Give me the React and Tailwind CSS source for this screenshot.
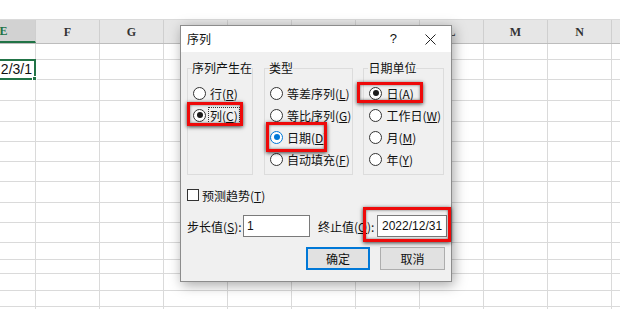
import React from "react";

const COLS = ["E", "F", "G", "H", "I", "J", "K", "L", "M", "N"];
const HIDDEN = ["H", "I", "J", "K"];
const ROW_H = [
    "h-[16px]", "h-[20px]", "h-[21px]", "h-[21px]", "h-[20px]", "h-[20px]", "h-[20px]",
    "h-[21px]", "h-[20px]", "h-[20px]", "h-[17px]", "h-[14px]", "h-[17px]", "h-[16px]", "h-[20px]",
];

function Radio({ label, accel, checked, blue, focus }) {
    return (
        <div className="flex items-center h-[22px] ml-[1px] gap-[3px]">
            <span
                className={`w-[13px] h-[13px] rounded-full border bg-white flex items-center justify-center shrink-0 ${
                    blue ? "border-[#0078d7]" : "border-[#333]"
                }`}
            >
                {checked && (
                    <span className={`w-[6px] h-[6px] rounded-full ${blue ? "bg-[#0078d7]" : "bg-[#1a1a1a]"}`} />
                )}
            </span>
            <span className={`whitespace-nowrap leading-[15px] px-[1px] ${focus ? "outline outline-1 outline-dotted outline-[#333]" : ""}`}>
                {label}(<span className="underline">{accel}</span>)
            </span>
        </div>
    );
}

function Group({ title, width, children }) {
    return (
        <fieldset className={`${width} h-[115px] border border-[#dcdcdc] pl-[4px] shrink-0`}>
            <legend className="leading-[16px] px-0">{title}</legend>
            <div className="mt-[6px] flex flex-col">{children}</div>
        </fieldset>
    );
}

function RedBox({ className }) {
    return (
        <div
            className={`absolute border-[3px] border-[#ee0a0a] shadow-[0_1px_4px_rgba(0,0,0,0.75),inset_0_0_3px_rgba(0,0,0,0.55)] ${className}`}
        />
    );
}

export default function App() {
    return (
        <div className="relative w-[620px] h-[309px] overflow-hidden bg-white font-['Liberation_Sans',sans-serif]">
            {/* sheet */}
            <div className="h-[20px] bg-white border-b border-[#dadada]" />
            <div className="flex -ml-[28px] h-[24px] bg-[#e6e6e6] border-b border-[#bdbdbd]">
                {COLS.map((c, i) => (
                    <div
                        key={c}
                        className={`w-[64px] shrink-0 border-r border-[#cfcfcf] flex items-center justify-center font-['Liberation_Serif',serif] font-bold text-[12px] ${
                            i === 0 ? "bg-[#d2d2d2] text-[#217346] border-b-2 border-b-[#217346]" : "text-[#333]"
                        }`}
                    >
                        {HIDDEN.includes(c) ? "" : c}
                    </div>
                ))}
                <div className="flex-1" />
            </div>
            {ROW_H.map((h, r) => (
                <div key={r} className={`flex -ml-[28px] ${h} border-b border-[#dadada]`}>
                    {COLS.map((c, i) => (
                        <div key={c} className="relative w-[64px] shrink-0 border-r border-[#dadada]">
                            {r === 1 && i === 0 && (
                                <div className="absolute -inset-y-[1px] -left-[1px] -right-[1px] border-2 border-[#217346] flex items-center justify-end pr-[2px] text-[14px] text-[#111]">
                                    2/3/1
                                    <span className="absolute -right-[3px] -bottom-[3px] w-[5px] h-[5px] bg-[#217346] border border-white" />
                                </div>
                            )}
                        </div>
                    ))}
                    <div className="flex-1" />
                </div>
            ))}

            {/* dialog window */}
            <div className="absolute left-[180px] top-[25px] w-[272px] h-[257px] border border-[#8c8c8c] bg-[#f0f0f0] shadow-[2px_3px_12px_rgba(0,0,0,0.35)] flex flex-col text-[12px] text-[#111] font-['Noto_Sans_CJK_SC',sans-serif]">
                <div className="h-[26px] bg-white flex items-center pl-[6px] shrink-0">
                    <span className="leading-[16px]">序列</span>
                    <span className="ml-auto mr-[28px] font-['Liberation_Sans',sans-serif] text-[13px]">?</span>
                    <svg width="11" height="11" viewBox="0 0 11 11" className="mr-[15px]">
                        <path d="M0.5 0.5L10.5 10.5M10.5 0.5L0.5 10.5" stroke="#222" strokeWidth="1" />
                    </svg>
                </div>

                <div className="flex pl-[6px] mt-[8px]">
                    <Group title="序列产生在" width="w-[66px]">
                        <Radio label="行" accel="R" />
                        <Radio label="列" accel="C" checked focus />
                    </Group>
                    <div className="w-[11px] shrink-0" />
                    <Group title="类型" width="w-[89px]">
                        <Radio label="等差序列" accel="L" />
                        <Radio label="等比序列" accel="G" />
                        <Radio label="日期" accel="D" checked blue />
                        <Radio label="自动填充" accel="F" />
                    </Group>
                    <div className="w-[10px] shrink-0" />
                    <Group title="日期单位" width="w-[81px]">
                        <Radio label="日" accel="A" checked />
                        <Radio label="工作日" accel="W" />
                        <Radio label="月" accel="M" />
                        <Radio label="年" accel="Y" />
                    </Group>
                </div>

                <div className="flex items-center h-[18px] mt-[11px] pl-[6px] gap-[3px]">
                    <span className="w-[12px] h-[12px] border border-[#333] bg-white" />
                    <span className="leading-[15px]">
                        预测趋势(<span className="underline">T</span>)
                    </span>
                </div>

                <div className="flex items-center h-[22px] mt-[11px] pl-[6px]">
                    <span className="w-[56px] leading-[15px] whitespace-nowrap">
                        步长值(<span className="underline">S</span>):
                    </span>
                    <div className="w-[67px] h-[22px] border border-[#7a7a7a] bg-white flex items-center pl-[3px] font-['Liberation_Sans',sans-serif]">
                        1
                    </div>
                    <span className="ml-[8px] w-[59px] leading-[15px] whitespace-nowrap">
                        终止值(<span className="underline">O</span>):
                    </span>
                    <div className="w-[70px] h-[22px] border border-[#7a7a7a] bg-white flex items-center pl-[4px] font-['Liberation_Sans',sans-serif]">
                        2022/12/31
                    </div>
                </div>

                <div className="flex justify-end gap-[10px] pr-[6px] mt-[10px]">
                    <button className="w-[64px] h-[23px] border-2 border-[#0078d7] bg-[#e1e1e1] leading-[15px]">确定</button>
                    <button className="w-[65px] h-[23px] border border-[#adadad] bg-[#e1e1e1] leading-[15px]">取消</button>
                </div>
            </div>

            {/* annotations */}
            <RedBox className="left-[187px] top-[102px] w-[56px] h-[24px]" />
            <RedBox className="left-[266px] top-[122px] w-[61px] h-[30px]" />
            <RedBox className="left-[357px] top-[82px] w-[66px] h-[21px]" />
            <RedBox className="left-[363px] top-[207px] w-[88px] h-[35px]" />
        </div>
    );
}
